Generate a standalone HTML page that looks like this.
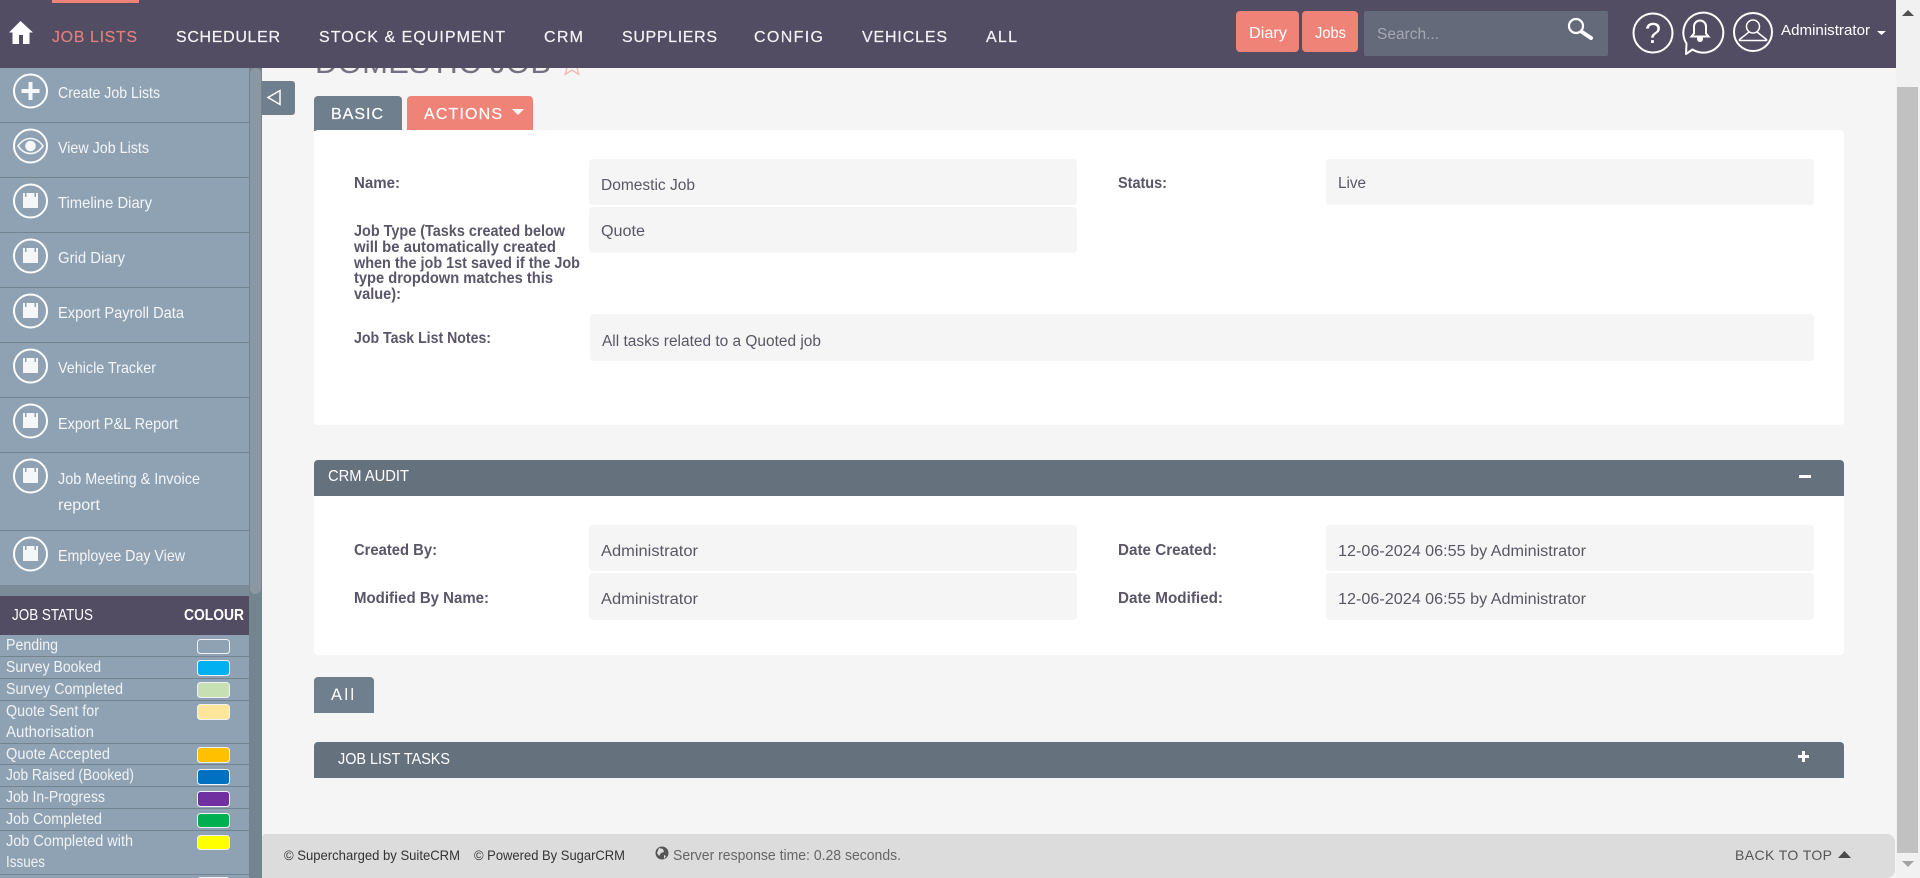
<!DOCTYPE html>
<html lang="en">
<head>
<meta charset="utf-8">
<title>Domestic Job</title>
<style>
html,body{margin:0;padding:0;width:1920px;height:878px;overflow:hidden;background:#f5f5f5}
svg{display:block;position:absolute;left:0;top:0}
text{font-family:"Liberation Sans",Arial,sans-serif;white-space:pre}
.nav{font-size:16px;fill:#f4f4f6;stroke:#f4f4f6;stroke-width:.2px}
.side{font-size:16px;fill:#f4f6f8}
.st{font-size:15.5px;fill:#f0f3f5}
.lb{font-size:15.5px;font-weight:bold;fill:#5a5568}
.val{font-size:15.5px;fill:#5a5764}
.wh{font-size:15.5px;fill:#fff}
.ft{font-size:14px;fill:#333}
.ic{fill:none;stroke:#fff;stroke-width:2}
</style>
</head>
<body>
<svg width="1920" height="878" viewBox="0 0 1920 878" xmlns="http://www.w3.org/2000/svg">
<rect width="1920" height="878" fill="#f5f5f5"/>

<!-- page title, scrolled under header -->
<text x="315" y="73" font-size="31" fill="#75717f" textLength="236">DOMESTIC JOB</text>
<path d="M572 53l3 8 8 .5-6.300 5 2.200 8-6.900-4.500-6.900 4.500 2.200-8-6.300-5 8-.5z" fill="none" stroke="#f1b5ad" stroke-width="1.200"/>

<!-- scrollbar -->
<rect x="1896" y="0" width="24" height="878" fill="#f1f1f1"/>
<rect x="1897" y="87" width="21" height="766" fill="#c1c1c1"/>
<path d="M1902 16l6-6 6 6z" fill="#505050"/>
<path d="M1902 861l6 6 6-6z" fill="#a3a3a3"/>

<!-- header -->
<rect width="1896" height="68" fill="#534d64"/>
<rect x="52" y="0" width="87" height="3" fill="#f08377"/>
<path d="M20.500 21L9 32.500h3.500V44h6.500v-9h4v9h6.500V32.500H33z" fill="#fff"/>
<text class="nav" x="52" y="42" style="fill:#df7f79;stroke:#df7f79" textLength="85">JOB LISTS</text>
<text class="nav" x="176" y="42" textLength="104">SCHEDULER</text>
<text class="nav" x="319" y="42" textLength="186">STOCK &amp; EQUIPMENT</text>
<text class="nav" x="544" y="42" textLength="39">CRM</text>
<text class="nav" x="622" y="42" textLength="95">SUPPLIERS</text>
<text class="nav" x="754" y="42" textLength="69">CONFIG</text>
<text class="nav" x="862" y="42" textLength="85">VEHICLES</text>
<text class="nav" x="986" y="42" textLength="31">ALL</text>

<rect x="1236" y="11" width="63" height="41" rx="4" fill="#f08377"/>
<rect x="1302" y="11" width="56" height="41" rx="4" fill="#f08377"/>
<text x="1249" y="38" font-size="16" fill="#fff" textLength="38" lengthAdjust="spacingAndGlyphs">Diary</text>
<text x="1315" y="38" font-size="16" fill="#fff" textLength="31" lengthAdjust="spacingAndGlyphs">Jobs</text>
<rect x="1364" y="11" width="244" height="45" rx="2" fill="#656a7a"/>
<text x="1377" y="39" font-size="15.500" fill="#a5a7b2" textLength="62" lengthAdjust="spacingAndGlyphs">Search...</text>
<circle cx="1576" cy="26" r="7" fill="none" stroke="#fff" stroke-width="2.200"/>
<path d="M1582 32l9 6" stroke="#fff" stroke-width="4" stroke-linecap="round"/>
<circle class="ic" cx="1653" cy="33" r="19.500"/>
<text x="1653" y="43" font-size="29" fill="#fff" text-anchor="middle">?</text>
<path class="ic" d="M1686 54l.5-10.500a20 20 0 1 1 6 6z" stroke-linejoin="round"/>
<path d="M1700 20.500a6 6 0 0 0-6 6v7l-2.500 3h17l-2.500-3v-7a6 6 0 0 0-6-6z" fill="none" stroke="#fff" stroke-width="2"/>
<path d="M1697 37h6v2a3 3 0 0 1-6 0z" fill="#fff"/>
<circle class="ic" cx="1753" cy="32" r="19"/>
<circle cx="1753" cy="26.500" r="6.500" fill="none" stroke="#fff" stroke-width="1.500"/>
<path d="M1749 32l-9.500 7.500v1h27v-1L1757 32" fill="none" stroke="#fff" stroke-width="1.500"/>
<text x="1781" y="35" font-size="15" fill="#fff" textLength="89" lengthAdjust="spacingAndGlyphs">Administrator</text>
<path d="M1877 31h9l-4.500 4z" fill="#fff"/>

<!-- sidebar -->
<rect x="0" y="68" width="249" height="528" fill="#8fa2b3"/>
<rect x="249" y="68" width="13" height="810" fill="#75858f"/>
<rect x="250" y="68" width="11" height="526" rx="5" fill="#8a98a3"/>
<g fill="#73848f">
<rect y="122" width="249" height="1"/><rect y="177" width="249" height="1"/><rect y="232" width="249" height="1"/><rect y="287" width="249" height="1"/><rect y="342" width="249" height="1"/><rect y="397" width="249" height="1"/><rect y="452" width="249" height="1"/><rect y="530" width="249" height="1"/>
</g>
<rect y="585" width="249" height="11" fill="#7b8b98"/>
<g class="ic">
<circle cx="30.500" cy="91" r="16.500"/><circle cx="30.500" cy="146" r="16.500"/><circle cx="30.500" cy="201" r="16.500"/><circle cx="30.500" cy="256" r="16.500"/><circle cx="30.500" cy="311" r="16.500"/><circle cx="30.500" cy="366" r="16.500"/><circle cx="30.500" cy="421" r="16.500"/><circle cx="30.500" cy="476" r="16.500"/><circle cx="30.500" cy="554" r="16.500"/>
</g>
<path d="M28.500 82h4v7h7v4h-7v7h-4v-7h-7v-4h7z" fill="#f4f6f8"/>
<path d="M18 146c3.500-5 8-7.500 12.500-7.500S39.500 141 43 146c-3.500 5-8 7.500-12.500 7.500S21.500 151 18 146z" fill="none" stroke="#f4f6f8" stroke-width="1.600"/>
<circle cx="30.500" cy="146" r="5.300" fill="#f4f6f8"/>
<g fill="#f4f6f8">
<path d="M23 193h2v4h1.500v-4h8v4h1.500v-4h2v15h-15z"/>
<path d="M23 248h2v4h1.500v-4h8v4h1.500v-4h2v15h-15z"/>
<path d="M23 303h2v4h1.500v-4h8v4h1.500v-4h2v15h-15z"/>
<path d="M23 358h2v4h1.500v-4h8v4h1.500v-4h2v15h-15z"/>
<path d="M23 413h2v4h1.500v-4h8v4h1.500v-4h2v15h-15z"/>
<path d="M23 468h2v4h1.500v-4h8v4h1.500v-4h2v15h-15z"/>
<path d="M23 546h2v4h1.500v-4h8v4h1.500v-4h2v15h-15z"/>
</g>
<text class="side" x="58" y="98" textLength="102" lengthAdjust="spacingAndGlyphs">Create Job Lists</text>
<text class="side" x="58" y="153" textLength="91" lengthAdjust="spacingAndGlyphs">View Job Lists</text>
<text class="side" x="58" y="208" textLength="94" lengthAdjust="spacingAndGlyphs">Timeline Diary</text>
<text class="side" x="58" y="263" textLength="67" lengthAdjust="spacingAndGlyphs">Grid Diary</text>
<text class="side" x="58" y="318" textLength="126" lengthAdjust="spacingAndGlyphs">Export Payroll Data</text>
<text class="side" x="58" y="373" textLength="98" lengthAdjust="spacingAndGlyphs">Vehicle Tracker</text>
<text class="side" x="58" y="429" textLength="120" lengthAdjust="spacingAndGlyphs">Export P&amp;L Report</text>
<text class="side" x="58" y="484" textLength="142" lengthAdjust="spacingAndGlyphs">Job Meeting &amp; Invoice</text>
<text class="side" x="58" y="510" textLength="42" lengthAdjust="spacingAndGlyphs">report</text>
<text class="side" x="58" y="561" textLength="127" lengthAdjust="spacingAndGlyphs">Employee Day View</text>

<!-- job status -->
<rect y="596" width="249" height="39" fill="#534d64"/>
<text x="12" y="620" font-size="16" fill="#fff" textLength="81" lengthAdjust="spacingAndGlyphs">JOB STATUS</text>
<text x="184" y="620" font-size="16" font-weight="bold" fill="#fff" textLength="60" lengthAdjust="spacingAndGlyphs">COLOUR</text>
<rect y="635" width="249" height="243" fill="#8fa2b3"/>
<g fill="#73848f">
<rect y="656" width="249" height="1"/><rect y="678" width="249" height="1"/><rect y="700" width="249" height="1"/><rect y="743" width="249" height="1"/><rect y="764" width="249" height="1"/><rect y="786" width="249" height="1"/><rect y="808" width="249" height="1"/><rect y="830" width="249" height="1"/><rect y="874" width="249" height="1"/>
</g>
<text class="st" x="6" y="650" textLength="52" lengthAdjust="spacingAndGlyphs">Pending</text>
<text class="st" x="6" y="672" textLength="95" lengthAdjust="spacingAndGlyphs">Survey Booked</text>
<text class="st" x="6" y="694" textLength="117" lengthAdjust="spacingAndGlyphs">Survey Completed</text>
<text class="st" x="6" y="716" textLength="93" lengthAdjust="spacingAndGlyphs">Quote Sent for</text>
<text class="st" x="6" y="737" textLength="88" lengthAdjust="spacingAndGlyphs">Authorisation</text>
<text class="st" x="6" y="759" textLength="104" lengthAdjust="spacingAndGlyphs">Quote Accepted</text>
<text class="st" x="6" y="780" textLength="128" lengthAdjust="spacingAndGlyphs">Job Raised (Booked)</text>
<text class="st" x="6" y="802" textLength="99" lengthAdjust="spacingAndGlyphs">Job In-Progress</text>
<text class="st" x="6" y="824" textLength="96" lengthAdjust="spacingAndGlyphs">Job Completed</text>
<text class="st" x="6" y="846" textLength="127" lengthAdjust="spacingAndGlyphs">Job Completed with</text>
<text class="st" x="6" y="867" textLength="39" lengthAdjust="spacingAndGlyphs">Issues</text>
<g stroke="#eef2f5" stroke-width="1">
<rect x="197.500" y="639.500" width="32" height="14" rx="3" fill="#8fa2b3"/>
<rect x="197.500" y="660.500" width="32" height="15" rx="3" fill="#00b0f0"/>
<rect x="197.500" y="682.500" width="32" height="15" rx="3" fill="#c6e0b4"/>
<rect x="197.500" y="704.500" width="32" height="15" rx="3" fill="#ffe699"/>
<rect x="197.500" y="747.500" width="32" height="15" rx="3" fill="#ffc000"/>
<rect x="197.500" y="769.500" width="32" height="15" rx="3" fill="#0070c0"/>
<rect x="197.500" y="791.500" width="32" height="15" rx="3" fill="#7030a0"/>
<rect x="197.500" y="813.500" width="32" height="14" rx="3" fill="#00b050"/>
<rect x="197.500" y="835.500" width="32" height="14" rx="3" fill="#ffff00"/>
<rect x="197.500" y="877.500" width="32" height="14" rx="3" fill="#fff"/>
</g>

<!-- sidebar toggle -->
<path d="M262 81h30a3 3 0 0 1 3 3v28a3 3 0 0 1-3 3h-30z" fill="#6f7f8d"/>
<path d="M280 90.500v14l-12-7z" fill="none" stroke="#fff" stroke-width="1.500"/>

<!-- tabs -->
<path d="M314 131V100a4 4 0 0 1 4-4h80a4 4 0 0 1 4 4v31z" fill="#6f7f8d"/>
<path d="M407 131V100a4 4 0 0 1 4-4h118a4 4 0 0 1 4 4v31z" fill="#f08377"/>
<text x="331" y="119" font-size="16" fill="#fff" textLength="52" stroke="#fff" stroke-width=".2">BASIC</text>
<text x="424" y="119" font-size="16" fill="#fff" textLength="78" stroke="#fff" stroke-width=".2">ACTIONS</text>
<path d="M512 109h12l-6 6z" fill="#fff"/>

<!-- basic panel -->
<rect x="314" y="130" width="1530" height="295" rx="4" fill="#fff"/>
<g fill="#f5f5f5">
<rect x="589" y="159" width="488" height="46" rx="4"/>
<rect x="589" y="207" width="488" height="46" rx="4"/>
<rect x="590" y="314" width="1224" height="47" rx="4"/>
<rect x="1326" y="159" width="488" height="46" rx="4"/>
</g>
<text class="lb" x="354" y="188" textLength="46" lengthAdjust="spacingAndGlyphs">Name:</text>
<text class="lb" x="354" y="236" textLength="211" lengthAdjust="spacingAndGlyphs">Job Type (Tasks created below</text>
<text class="lb" x="354" y="252" textLength="202" lengthAdjust="spacingAndGlyphs">will be automatically created</text>
<text class="lb" x="354" y="268" textLength="226" lengthAdjust="spacingAndGlyphs">when the job 1st saved if the Job</text>
<text class="lb" x="354" y="283" textLength="199" lengthAdjust="spacingAndGlyphs">type dropdown matches this</text>
<text class="lb" x="354" y="299" textLength="47" lengthAdjust="spacingAndGlyphs">value):</text>
<text class="lb" x="354" y="343" textLength="137" lengthAdjust="spacingAndGlyphs">Job Task List Notes:</text>
<text class="lb" x="1118" y="188" textLength="49" lengthAdjust="spacingAndGlyphs">Status:</text>
<text class="val" x="601" y="190" textLength="94" lengthAdjust="spacingAndGlyphs">Domestic Job</text>
<text class="val" x="601" y="236" textLength="44" lengthAdjust="spacingAndGlyphs">Quote</text>
<text class="val" x="602" y="346" textLength="219" lengthAdjust="spacingAndGlyphs">All tasks related to a Quoted job</text>
<text class="val" x="1338" y="188" textLength="28" lengthAdjust="spacingAndGlyphs">Live</text>

<!-- CRM audit -->
<rect x="314" y="460" width="1530" height="195" rx="4" fill="#fff"/>
<path d="M314 496V464a4 4 0 0 1 4-4h1522a4 4 0 0 1 4 4v32z" fill="#66717e"/>
<text class="wh" x="328" y="481" textLength="81" lengthAdjust="spacingAndGlyphs">CRM AUDIT</text>
<rect x="1799" y="475" width="12" height="3" fill="#fff"/>
<g fill="#f5f5f5">
<rect x="589" y="525" width="488" height="46" rx="4"/>
<rect x="589" y="573" width="488" height="47" rx="4"/>
<rect x="1326" y="525" width="488" height="46" rx="4"/>
<rect x="1326" y="573" width="488" height="47" rx="4"/>
</g>
<text class="lb" x="354" y="555" textLength="83" lengthAdjust="spacingAndGlyphs">Created By:</text>
<text class="lb" x="354" y="603" textLength="135" lengthAdjust="spacingAndGlyphs">Modified By Name:</text>
<text class="lb" x="1118" y="555" textLength="99" lengthAdjust="spacingAndGlyphs">Date Created:</text>
<text class="lb" x="1118" y="603" textLength="105" lengthAdjust="spacingAndGlyphs">Date Modified:</text>
<text class="val" x="601" y="556" textLength="97" lengthAdjust="spacingAndGlyphs">Administrator</text>
<text class="val" x="601" y="604" textLength="97" lengthAdjust="spacingAndGlyphs">Administrator</text>
<text class="val" x="1338" y="556" textLength="248" lengthAdjust="spacingAndGlyphs">12-06-2024 06:55 by Administrator</text>
<text class="val" x="1338" y="604" textLength="248" lengthAdjust="spacingAndGlyphs">12-06-2024 06:55 by Administrator</text>

<!-- All tab -->
<path d="M314 713V681a4 4 0 0 1 4-4h52a4 4 0 0 1 4 4v32z" fill="#6f7f8d"/>
<text x="331" y="700" font-size="16.500" fill="#fff" textLength="23">All</text>

<!-- job list tasks -->
<path d="M314 778V746a4 4 0 0 1 4-4h1522a4 4 0 0 1 4 4v32z" fill="#66717e"/>
<text class="wh" x="338" y="764" textLength="112" lengthAdjust="spacingAndGlyphs">JOB LIST TASKS</text>
<path d="M1802 751h3v4h4v3h-4v4h-3v-4h-4v-3h4z" fill="#fff"/>

<!-- footer -->
<path d="M262 878V838a4 4 0 0 1 4-4h1621a8 8 0 0 1 8 8v28a8 8 0 0 1-8 8z" fill="#dcdcdc"/>
<text class="ft" x="284" y="860" textLength="176" lengthAdjust="spacingAndGlyphs">© Supercharged by SuiteCRM</text>
<text class="ft" x="474" y="860" textLength="151" lengthAdjust="spacingAndGlyphs">© Powered By SugarCRM</text>
<circle cx="662" cy="853" r="6.500" fill="#555"/>
<path d="M659 848l4 1 1 3-3 1-2 3-2-3zM664 855l2 1-2 3z" fill="#dcdcdc"/>
<text x="673" y="860" font-size="15" fill="#666" textLength="228" lengthAdjust="spacingAndGlyphs">Server response time: 0.28 seconds.</text>
<text x="1735" y="860" font-size="14" fill="#555" textLength="97">BACK TO TOP</text>
<path d="M1838 858l6.500-7 6.500 7z" fill="#4a4a4a"/>
</svg>
</body>
</html>
